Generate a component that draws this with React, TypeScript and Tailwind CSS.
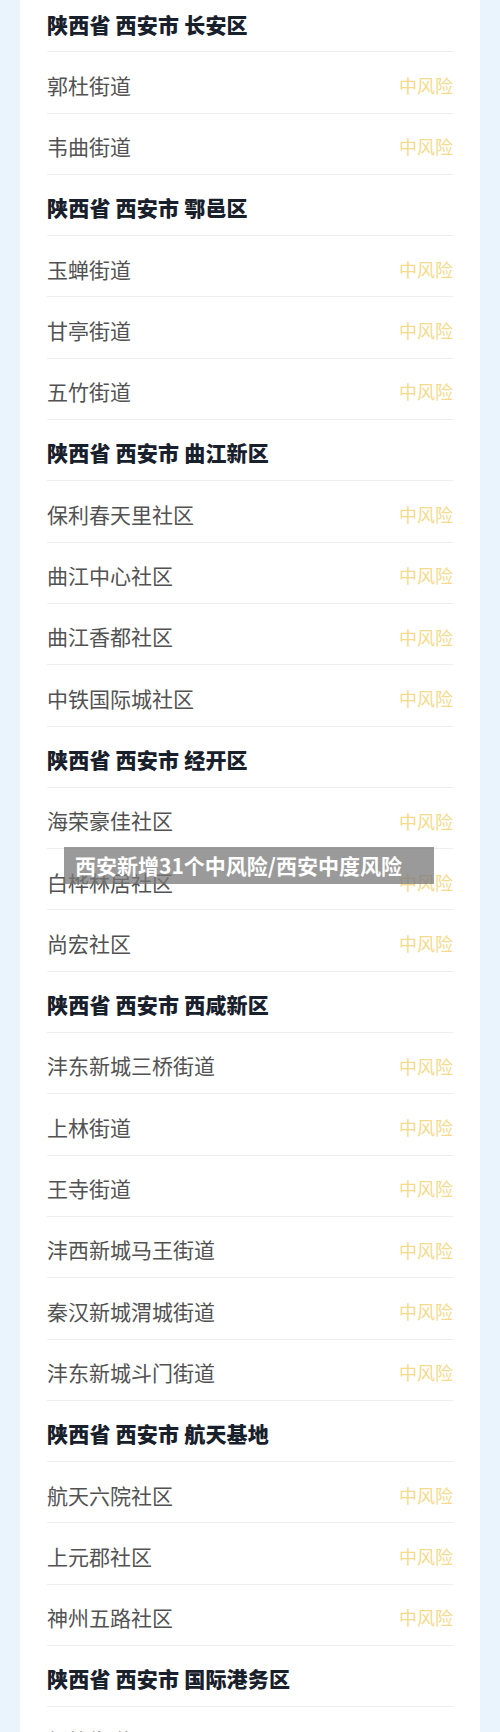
import React from 'react';

type Row = { kind: 'head'; text: string } | { kind: 'item'; text: string };

const GROUPS: { area: string; items: string[] }[] = [
  { area: '长安区', items: ['郭杜街道', '韦曲街道'] },
  { area: '鄠邑区', items: ['玉蝉街道', '甘亭街道', '五竹街道'] },
  { area: '曲江新区', items: ['保利春天里社区', '曲江中心社区', '曲江香都社区', '中铁国际城社区'] },
  { area: '经开区', items: ['海荣豪佳社区', '白桦林居社区', '尚宏社区'] },
  {
    area: '西咸新区',
    items: ['沣东新城三桥街道', '上林街道', '王寺街道', '沣西新城马王街道', '秦汉新城渭城街道', '沣东新城斗门街道'],
  },
  { area: '航天基地', items: ['航天六院社区', '上元郡社区', '神州五路社区'] },
  { area: '国际港务区', items: ['新筑街道'] },
];

const ROWS: Row[] = GROUPS.flatMap((g) => [
  { kind: 'head' as const, text: `陕西省 西安市 ${g.area}` },
  ...g.items.map((t) => ({ kind: 'item' as const, text: t })),
]);

export default function App() {
  return (
    <div
      className="relative h-[1732px] w-[500px] overflow-hidden bg-[#eaf4fd]"
      style={{ fontFamily: '"Noto Sans CJK SC", "Noto Sans", sans-serif' }}
    >
      <div className="mx-[20px] h-full bg-white px-[27px]">
        {ROWS.map((row, i) => (
          <div
            key={i}
            className={`flex items-center justify-between border-b border-[#eeeeee] ${
              i === 0 ? 'h-[52.3px] pb-[2px]' : 'h-[61.3px] pt-[6px]'
            }`}
          >
            {row.kind === 'head' ? (
              <span className="text-[21px] font-black tracking-[0.2px] text-[#18202c]">{row.text}</span>
            ) : (
              <>
                <span className="text-[21px] text-[#525252]">{row.text}</span>
                <span className="text-[18px] text-[#f4da8c]">中风险</span>
              </>
            )}
          </div>
        ))}
      </div>

      <div className="absolute left-[64px] top-[847px] flex h-[37px] w-[370px] items-center bg-[rgba(120,120,120,0.75)] pl-[11px]">
        <span className="text-[21px] font-bold leading-none text-white">西安新增31个中风险/西安中度风险</span>
      </div>
    </div>
  );
}
